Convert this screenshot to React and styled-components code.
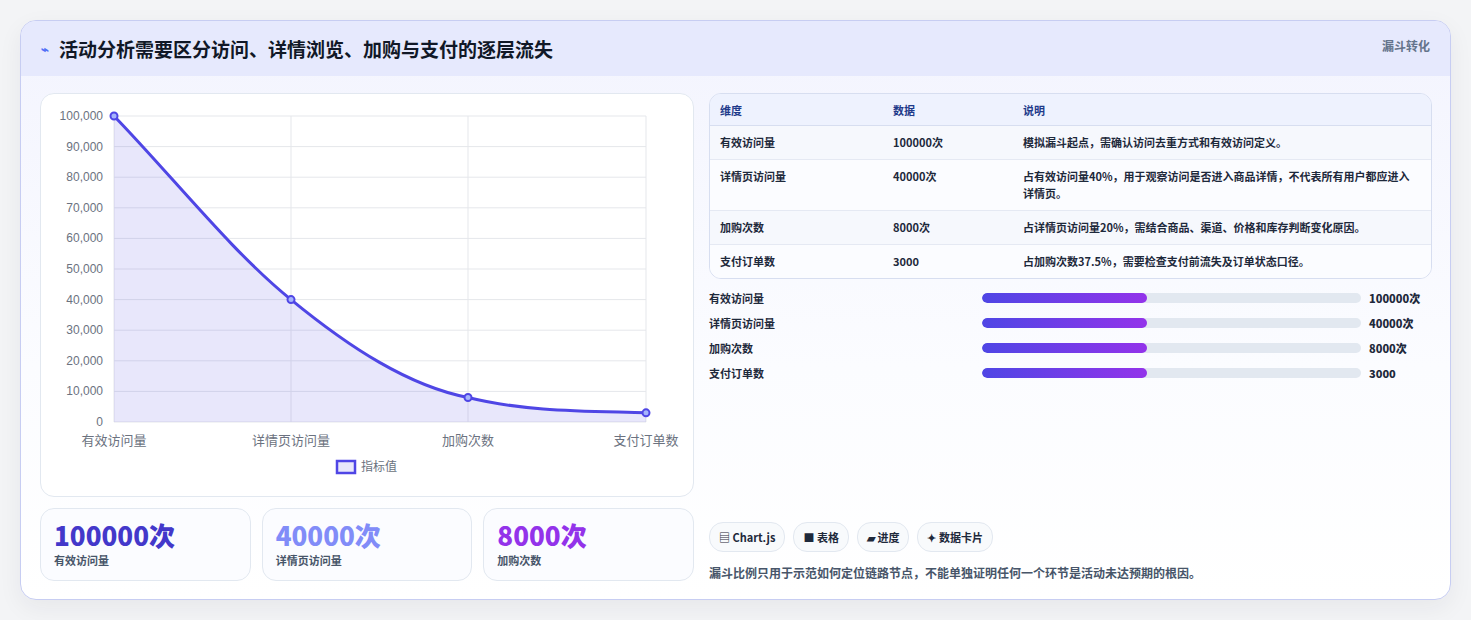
import React from 'react'
import styled, { createGlobalStyle } from 'styled-components'

const Global = createGlobalStyle`
  body { margin: 0; background: #f3f4f6; font-family: "Noto Sans CJK SC", "Noto Sans", sans-serif; }
`

const Page = styled.div`
  padding: 20px;
  height: 620px;
  box-sizing: border-box;
`

const Card = styled.div`
  height: 580px;
  box-sizing: border-box;
  border: 1px solid #c7cdf2;
  border-radius: 16px;
  background: linear-gradient(180deg, #f3f4fe 0%, #fbfcff 60%, #ffffff 100%);
  box-shadow: 0 8px 24px rgba(30, 41, 59, 0.06);
  overflow: hidden;
  display: flex;
  flex-direction: column;
`

const Header = styled.div`
  height: 55px;
  background: #e6e9fd;
  display: flex;
  align-items: center;
  justify-content: space-between;
  padding: 0 20px;
  box-sizing: border-box;
`

const Title = styled.h1`
  margin: 0;
  font-size: 19px;
  font-weight: 700;
  color: #111827;
  display: flex;
  align-items: center;
  gap: 10px;
  span { color: #4f6ef7; font-size: 13px; }
`

const Tag = styled.div`
  font-size: 12px;
  font-weight: 700;
  color: #64748b;
  align-self: flex-start;
  margin-top: 16px;
`

const Body = styled.div`
  flex: 1;
  display: grid;
  grid-template-columns: 654px 1fr;
  gap: 15px;
  padding: 17px 18px 18px 19px;
`

const Left = styled.div`
  display: flex;
  flex-direction: column;
  gap: 11px;
`

const ChartBox = styled.div`
  height: 404px;
  background: #fff;
  border: 1px solid #e2e8f0;
  border-radius: 14px;
  box-sizing: border-box;
`

const Stats = styled.div`
  display: grid;
  grid-template-columns: repeat(3, 1fr);
  gap: 11px;
`

const Stat = styled.div`
  height: 73px;
  box-sizing: border-box;
  border: 1px solid #e2e8f0;
  border-radius: 14px;
  background: #fbfcff;
  padding: 9px 13px;
`

const StatValue = styled.div`
  font-size: 26px;
  font-weight: 800;
  line-height: 34px;
  color: ${p => p.$color};
`

const StatLabel = styled.div`
  font-size: 11px;
  color: #475569;
  font-weight: 600;
`

const Right = styled.div`
  display: flex;
  flex-direction: column;
`

const Table = styled.table`
  width: 100%;
  border-collapse: separate;
  border-spacing: 0;
  border: 1px solid #d7def0;
  border-radius: 12px;
  overflow: hidden;
  font-size: 11px;
  color: #1e293b;
  th {
    text-align: left;
    font-weight: 700;
    color: #1e3a8a;
    background: #eef2fe;
    height: 31px;
    padding: 0 10px;
    border-bottom: 1px solid #d7def0;
  }
  td {
    padding: 8px 10px;
    line-height: 17px;
    font-weight: 600;
    vertical-align: top;
    border-bottom: 1px solid #e5e9f3;
  }
  td:last-child { padding-right: 12px; }
  tr:nth-child(odd) td { background: #f6f8fd; }
  tr:nth-child(even) td { background: #fbfcff; }
  tr:last-child td { border-bottom: none; }
`

const Bars = styled.div`
  margin-top: 9px;
  display: flex;
  flex-direction: column;
  gap: 5px;
`

const BarRow = styled.div`
  display: grid;
  grid-template-columns: 265px 379px 1fr;
  gap: 8px;
  align-items: center;
  height: 20px;
  font-size: 11px;
  font-weight: 600;
  color: #1e293b;
  b { font-weight: 800; }
`

const Track = styled.div`
  height: 10px;
  background: #e2e8f0;
  border-radius: 5px;
  overflow: hidden;
`

const Fill = styled.div`
  height: 100%;
  border-radius: 5px;
  background: linear-gradient(90deg, #4f46e5, #9333ea);
`

const Chips = styled.div`
  margin-top: auto;
  display: flex;
  gap: 8px;
`

const Chip = styled.div`
  height: 28px;
  padding: 0 9px;
  border: 1px solid #e2e8f0;
  border-radius: 14px;
  background: #f8fafc;
  display: flex;
  align-items: center;
  gap: 3px;
  font-size: 11px;
  font-weight: 700;
  color: #1e293b;
`

const Note = styled.p`
  margin: 12px 0 0;
  font-size: 12px;
  color: #475569;
  font-weight: 600;
`

const rows = [
  ['有效访问量', '100000次', '模拟漏斗起点，需确认访问去重方式和有效访问定义。'],
  ['详情页访问量', '40000次', '占有效访问量40%，用于观察访问是否进入商品详情，不代表所有用户都应进入详情页。'],
  ['加购次数', '8000次', '占详情页访问量20%，需结合商品、渠道、价格和库存判断变化原因。'],
  ['支付订单数', '3000', '占加购次数37.5%，需要检查支付前流失及订单状态口径。'],
]

const X0 = 73, X1 = 605, Y0 = 22, Y1 = 328
const xs = [73, 250, 427, 605]
const vals = [100000, 40000, 8000, 3000]
const yOf = v => Y1 - (v / 100000) * (Y1 - Y0)

function Chart() {
  const p = xs.map((x, i) => [x, yOf(vals[i])])
  const line = `M${p[0]} C132,83 191,158 ${p[1]} C309,254 368,292 ${p[2]} C486,318 546,317 ${p[3]}`
  const area = `${line} L${X1},${Y1} L${X0},${Y1} Z`
  return (
    <svg width="652" height="402" viewBox="0 0 652 402" fontFamily="Liberation Sans, sans-serif">
      {Array.from({ length: 11 }, (_, i) => {
        const y = Y1 - i * (Y1 - Y0) / 10
        return (
          <g key={i}>
            <line x1={X0} x2={X1} y1={y} y2={y} stroke="#e5e7eb" />
            <text x={62} y={y + 4} fontSize="12" fill="#6b7280" textAnchor="end">
              {(i * 10000).toLocaleString('en-US')}
            </text>
          </g>
        )
      })}
      {xs.map(x => <line key={x} x1={x} x2={x} y1={Y0} y2={Y1} stroke="#e5e7eb" />)}
      <path d={area} fill="rgba(99,91,230,0.15)" />
      <path d={line} fill="none" stroke="#4f46e5" strokeWidth="3" />
      {p.map(([x, y]) => <circle key={x} cx={x} cy={y} r="3.5" fill="#a5b4fc" stroke="#4f46e5" strokeWidth="2" />)}
      {['有效访问量', '详情页访问量', '加购次数', '支付订单数'].map((t, i) => (
        <text key={t} x={xs[i]} y={351} fontSize="13" fill="#6b7280" textAnchor="middle"
          fontFamily="Noto Sans CJK SC, sans-serif">{t}</text>
      ))}
      <rect x={296} y={367} width={18} height={12} fill="rgba(99,91,230,0.15)" stroke="#4f46e5" strokeWidth="2.5" />
      <text x={320} y={377} fontSize="12" fill="#6b7280" fontFamily="Noto Sans CJK SC, sans-serif">指标值</text>
    </svg>
  )
}

export default function App() {
  return (
    <>
      <Global />
      <Page>
        <Card>
          <Header>
            <Title><span>⌁</span>活动分析需要区分访问、详情浏览、加购与支付的逐层流失</Title>
            <Tag>漏斗转化</Tag>
          </Header>
          <Body>
            <Left>
              <ChartBox><Chart /></ChartBox>
              <Stats>
                <Stat><StatValue $color="#4338ca">100000次</StatValue><StatLabel>有效访问量</StatLabel></Stat>
                <Stat><StatValue $color="#818cf8">40000次</StatValue><StatLabel>详情页访问量</StatLabel></Stat>
                <Stat><StatValue $color="#9333ea">8000次</StatValue><StatLabel>加购次数</StatLabel></Stat>
              </Stats>
            </Left>
            <Right>
              <Table>
                <thead>
                  <tr><th style={{ width: 153 }}>维度</th><th style={{ width: 110 }}>数据</th><th>说明</th></tr>
                </thead>
                <tbody>
                  {rows.map(r => (
                    <tr key={r[0]}><td>{r[0]}</td><td>{r[1]}</td><td>{r[2]}</td></tr>
                  ))}
                </tbody>
              </Table>
              <Bars>
                {rows.map(r => (
                  <BarRow key={r[0]}>
                    <span>{r[0]}</span>
                    <Track><Fill style={{ width: '43.5%' }} /></Track>
                    <b>{r[1]}</b>
                  </BarRow>
                ))}
              </Bars>
              <Chips>
                <Chip>▤ Chart.js</Chip>
                <Chip>■ 表格</Chip>
                <Chip>▰ 进度</Chip>
                <Chip>✦ 数据卡片</Chip>
              </Chips>
              <Note>漏斗比例只用于示范如何定位链路节点，不能单独证明任何一个环节是活动未达预期的根因。</Note>
            </Right>
          </Body>
        </Card>
      </Page>
    </>
  )
}
